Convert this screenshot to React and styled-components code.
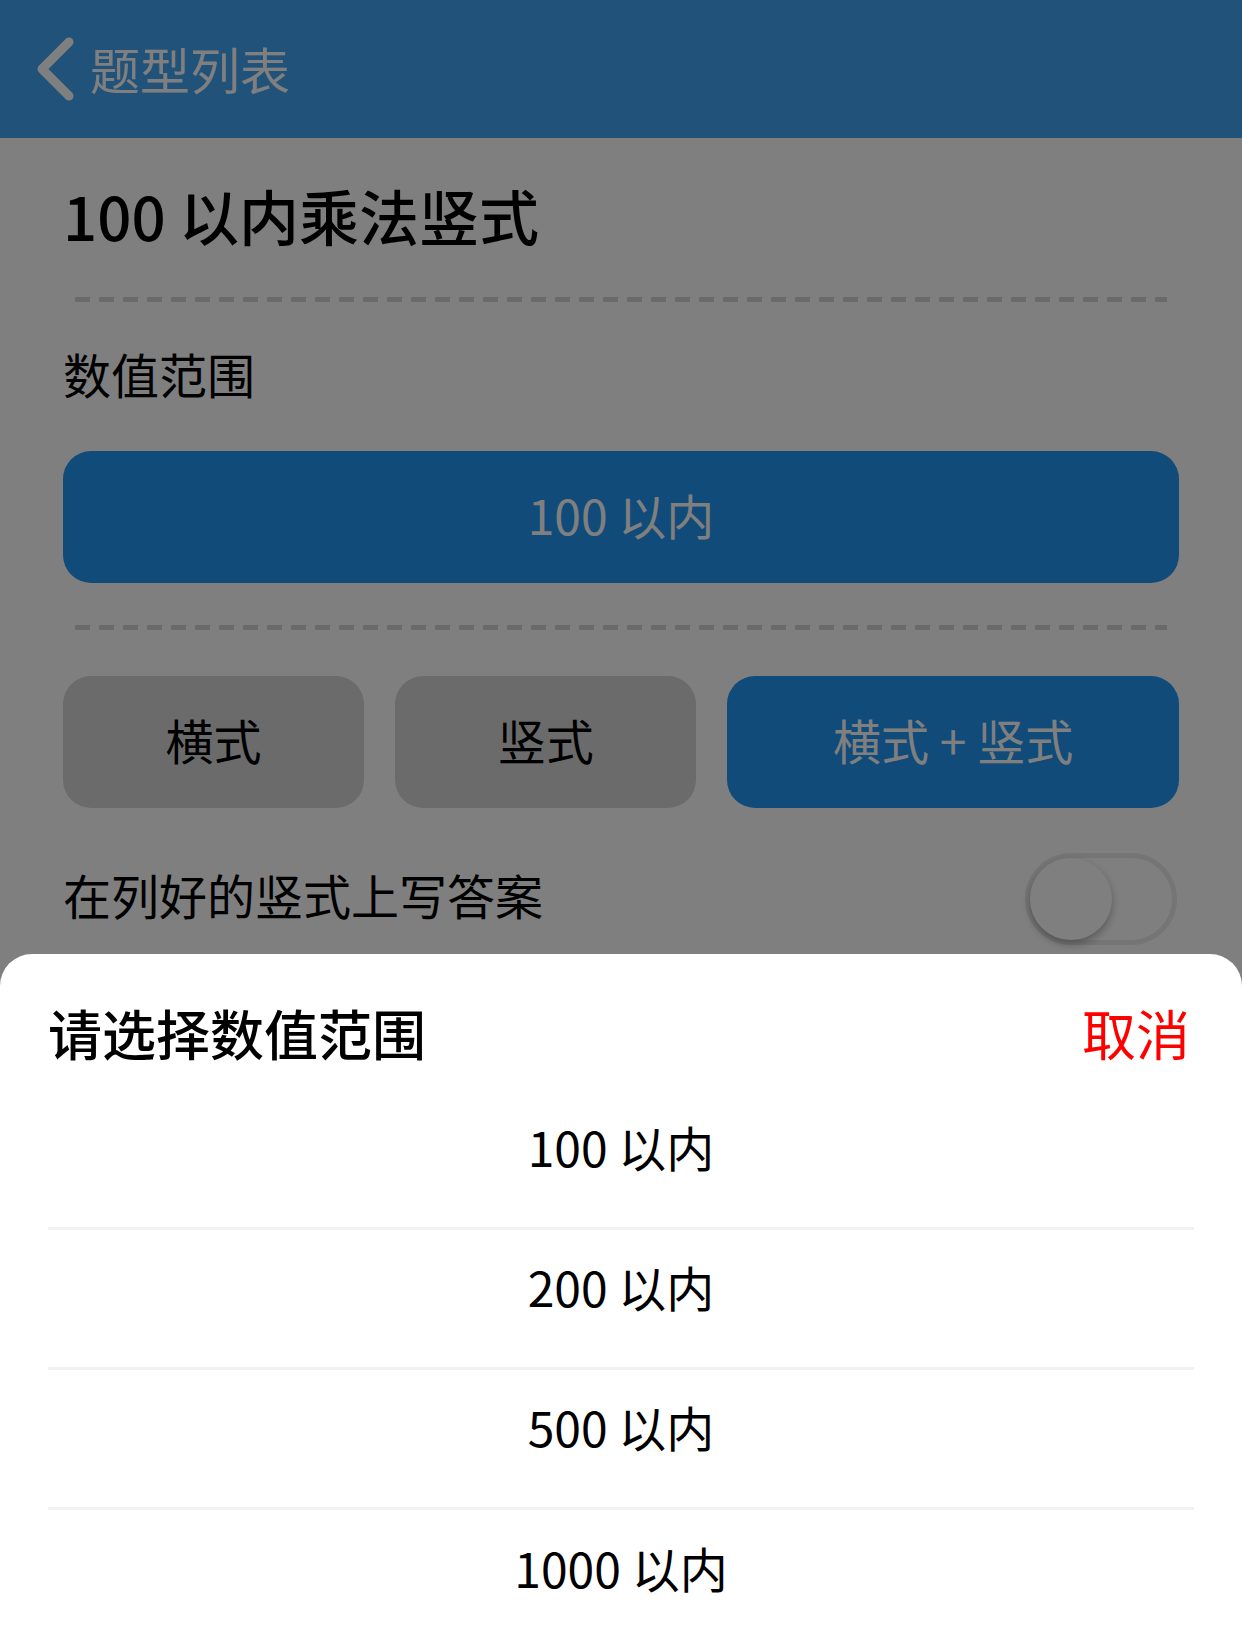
import React, { useState } from "react";
import styled, { createGlobalStyle } from "styled-components";

const GlobalStyle = createGlobalStyle`
  html, body {
    margin: 0;
    padding: 0;
    background: #ffffff;
    font-family: "Noto Sans CJK SC", "Noto Sans", sans-serif;
  }
  * {
    box-sizing: border-box;
  }
`;

const Screen = styled.div`
  width: 1242px;
  height: 1644px;
  overflow: hidden;
  position: relative;
  background: #ffffff;
`;

const NavBar = styled.div`
  height: 138px;
  background: #42a5f5;
  display: flex;
  align-items: center;
  padding-left: 36px;
`;

const BackButton = styled.div`
  display: flex;
  align-items: center;
  gap: 14px;
  color: #ffffff;
  font-size: 50px;
  line-height: 1;
`;

const BackLabel = styled.span`
  margin-bottom: 2px;
`;

const Content = styled.div`
  padding: 0 63px;
  display: flex;
  flex-direction: column;
`;

const Title = styled.h1`
  margin: 47px 0 0 0;
  font-size: 60px;
  font-weight: 500;
  line-height: 1;
  color: #000000;
`;

const Dashed = styled.div`
  margin: ${(p) => p.$top}px 12px 0 12px;
  height: 5px;
  background: repeating-linear-gradient(
    to right,
    #d5d5d5 0 15px,
    transparent 15px 24px
  );
`;

const Label = styled.div`
  margin-top: 47px;
  font-size: 48px;
  line-height: 1;
  color: #000000;
`;

const PickButton = styled.div`
  margin-top: 54px;
  height: 132px;
  padding-bottom: 7px;
  border-radius: 28px;
  background: #2196f3;
  color: #ffffff;
  font-size: 48px;
  line-height: 1;
  display: flex;
  align-items: center;
  justify-content: center;
`;

const Segments = styled.div`
  margin-top: 46px;
  display: flex;
  gap: 31px;
`;

const Segment = styled.div`
  flex: ${(p) => p.$grow};
  height: 132px;
  padding-bottom: 6px;
  border-radius: 28px;
  background: ${(p) => (p.$active ? "#2196f3" : "#d6d6d6")};
  color: ${(p) => (p.$active ? "#ffffff" : "#000000")};
  font-size: 48px;
  line-height: 1;
  display: flex;
  align-items: center;
  justify-content: center;
`;

const SwitchRow = styled.div`
  margin-top: 45px;
  display: flex;
  align-items: center;
  justify-content: space-between;
  padding-right: 2px;
  font-size: 48px;
  line-height: 1;
  color: #000000;
`;

const SwitchText = styled.span`
  margin-bottom: 10px;
`;

const Track = styled.div`
  width: 152px;
  height: 92px;
  border-radius: 46px;
  border: 5px solid #ebebeb;
  background: #ffffff;
  display: flex;
  align-items: center;
  justify-content: ${(p) => (p.$on ? "flex-end" : "flex-start")};
`;

const Knob = styled.div`
  width: 82px;
  height: 82px;
  border-radius: 50%;
  background: #ffffff;
  box-shadow: 0 4px 8px rgba(0, 0, 0, 0.3);
`;

const Dim = styled.div`
  position: absolute;
  inset: 0;
  background: rgba(0, 0, 0, 0.5);
`;

const Sheet = styled.div`
  position: absolute;
  left: 0;
  right: 0;
  top: 954px;
  bottom: 0;
  background: #ffffff;
  border-radius: 32px 32px 0 0;
  padding: 0 48px;
  overflow: hidden;
`;

const SheetHeader = styled.div`
  height: 136px;
  padding-top: 22px;
  display: flex;
  align-items: center;
  justify-content: space-between;
`;

const SheetTitle = styled.div`
  font-size: 54px;
  font-weight: 500;
  line-height: 1;
  color: #000000;
`;

const Cancel = styled.div`
  font-size: 54px;
  line-height: 1;
  color: #ff0000;
  margin-right: 4px;
`;

const Option = styled.div`
  height: 140px;
  padding-bottom: 26px;
  display: flex;
  align-items: center;
  justify-content: center;
  font-size: 48px;
  line-height: 1;
  color: #000000;
  border-bottom: 3px solid #f2f2f2;

  &:last-child {
    border-bottom: none;
  }
`;

const ranges = ["100 以内", "200 以内", "500 以内", "1000 以内"];

export default function App() {
  const [on] = useState(false);

  return (
    <Screen>
      <GlobalStyle />
      <NavBar>
        <BackButton>
          <svg width="40" height="66" viewBox="0 0 40 66">
            <path
              d="M33 6 L6 33 L33 60"
              fill="none"
              stroke="#ffffff"
              strokeWidth="9"
              strokeLinecap="round"
              strokeLinejoin="round"
            />
          </svg>
          <BackLabel>题型列表</BackLabel>
        </BackButton>
      </NavBar>

      <Content>
        <Title>100 以内乘法竖式</Title>
        <Dashed $top={52} />
        <Label>数值范围</Label>
        <PickButton>100 以内</PickButton>
        <Dashed $top={42} />
        <Segments>
          <Segment $grow={2}>横式</Segment>
          <Segment $grow={2}>竖式</Segment>
          <Segment $grow={3} $active>
            横式 + 竖式
          </Segment>
        </Segments>
        <SwitchRow>
          <SwitchText>在列好的竖式上写答案</SwitchText>
          <Track $on={on}>
            <Knob />
          </Track>
        </SwitchRow>
      </Content>

      <Dim />

      <Sheet>
        <SheetHeader>
          <SheetTitle>请选择数值范围</SheetTitle>
          <Cancel>取消</Cancel>
        </SheetHeader>
        {ranges.map((r) => (
          <Option key={r}>{r}</Option>
        ))}
      </Sheet>
    </Screen>
  );
}
